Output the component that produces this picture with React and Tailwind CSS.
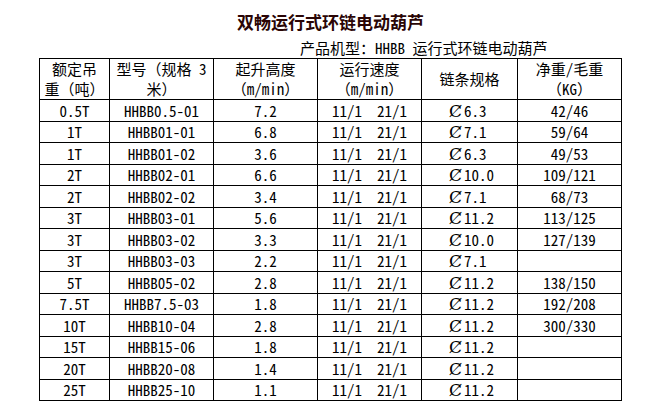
const rows = [
    ["0.5T", "HHBB0.5-01", "7.2", "6.3", "42/46"],
    ["1T", "HHBB01-01", "6.8", "7.1", "59/64"],
    ["1T", "HHBB01-02", "3.6", "6.3", "49/53"],
    ["2T", "HHBB02-01", "6.6", "10.0", "109/121"],
    ["2T", "HHBB02-02", "3.4", "7.1", "68/73"],
    ["3T", "HHBB03-01", "5.6", "11.2", "113/125"],
    ["3T", "HHBB03-02", "3.3", "10.0", "127/139"],
    ["3T", "HHBB03-03", "2.2", "7.1", ""],
    ["5T", "HHBB05-02", "2.8", "11.2", "138/150"],
    ["7.5T", "HHBB7.5-03", "1.8", "11.2", "192/208"],
    ["10T", "HHBB10-04", "2.8", "11.2", "300/330"],
    ["15T", "HHBB15-06", "1.8", "11.2", ""],
    ["20T", "HHBB20-08", "1.4", "11.2", ""],
    ["25T", "HHBB25-10", "1.1", "11.2", ""],
];

const cell = "border border-black p-0 text-center align-middle";

export default function App() {
    return (
        <div
            className="w-[646px] h-[409px] bg-white text-black pt-[12px]"
            style={{ fontFamily: '"Noto Sans Mono CJK SC", "Noto Sans CJK SC", "Liberation Mono", monospace' }}
        >
            <div className="pl-[237px] h-[20px] leading-[20px] text-[17px] font-bold text-[#2a0505] whitespace-nowrap">
                双畅运行式环链电动葫芦
            </div>
            <div className="pl-[300px] mt-[7px] h-[18px] leading-[18px] text-[15px] whitespace-nowrap">
                产品机型：HHBB 运行式环链电动葫芦
            </div>
            <table className="ml-[39px] mt-[1px] w-[583px] table-fixed border-collapse text-[15px] leading-[20px]">
                <colgroup>
                    <col className="w-[70px]" />
                    <col className="w-[104px]" />
                    <col className="w-[104px]" />
                    <col className="w-[104px]" />
                    <col className="w-[96px]" />
                    <col className="w-[104px]" />
                </colgroup>
                <thead>
                    <tr className="h-[41px]">
                        <th className={`${cell} font-normal`}>
                            额定吊<br />重（吨）
                        </th>
                        <th className={`${cell} font-normal whitespace-nowrap`}>
                            型号（规格 3<br />米）
                        </th>
                        <th className={`${cell} font-normal`}>
                            起升高度<br />（m/min）
                        </th>
                        <th className={`${cell} font-normal`}>
                            运行速度<br />（m/min）
                        </th>
                        <th className={`${cell} font-normal`}>链条规格</th>
                        <th className={`${cell} font-normal`}>
                            净重/毛重<br />（KG）
                        </th>
                    </tr>
                </thead>
                <tbody>
                    {rows.map((r, i) => (
                        <tr key={i} className={i % 2 === 0 ? "h-[22px]" : "h-[21px]"}>
                            <td className={cell}>{r[0]}</td>
                            <td className={cell}>{r[1]}</td>
                            <td className={cell}>{r[2]}</td>
                            <td className={`${cell} whitespace-pre`}>{"11/1  21/1"}</td>
                            <td className={`${cell} text-left pl-[27px] whitespace-nowrap`}>
                                <span className="inline-block w-[15px] text-[17px] leading-[20px] font-['DejaVu_Serif',serif]">
                                    Ȼ
                                </span>
                                {r[3]}
                            </td>
                            <td className={cell}>{r[4]}</td>
                        </tr>
                    ))}
                </tbody>
            </table>
        </div>
    );
}
